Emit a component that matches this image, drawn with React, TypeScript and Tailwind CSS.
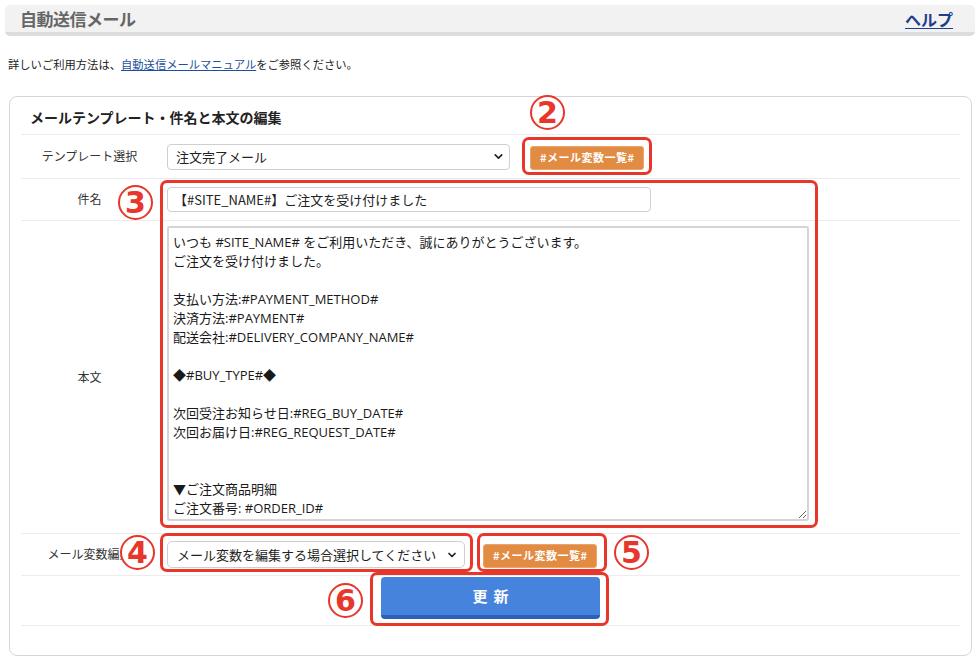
import { ChevronDown } from "lucide-react";

const FONT = { fontFamily: '"Noto Sans CJK JP", "Noto Sans", sans-serif' };
const BODY_FONT = { fontFamily: '"Open Sans", "Noto Sans CJK JP", sans-serif' };

const bodyText = `いつも #SITE_NAME# をご利用いただき、誠にありがとうございます。
ご注文を受け付けました。

支払い方法:#PAYMENT_METHOD#
決済方法:#PAYMENT#
配送会社:#DELIVERY_COMPANY_NAME#

◆#BUY_TYPE#◆

次回受注お知らせ日:#REG_BUY_DATE#
次回お届け日:#REG_REQUEST_DATE#


▼ご注文商品明細
ご注文番号: #ORDER_ID#
`;

function VarButton() {
  return (
    <button className="h-[24px] px-[9px] rounded-[3px] bg-[#e28b43] border border-[#eda46a] text-white text-[11px] font-bold tracking-[0.5px]">
      #メール変数一覧#
    </button>
  );
}

function Row({
  label,
  children,
  className = "",
}: {
  label?: string;
  children: React.ReactNode;
  className?: string;
}) {
  return (
    <div className={`flex border-t border-[#ececec] ${className}`}>
      <div className="w-[137px] shrink-0 self-center text-center text-[12px] text-[#333] whitespace-nowrap overflow-hidden">
        {label}
      </div>
      <div className="flex-1 flex items-center pl-[9px]">{children}</div>
    </div>
  );
}

// red annotation frame laid over the form
function Frame({ className }: { className: string }) {
  return (
    <div
      className={`absolute border-[3px] border-[#e8362a] rounded-[7px] pointer-events-none ${className}`}
    />
  );
}

function Num({ n, className }: { n: string; className: string }) {
  return (
    <div
      className={`absolute w-[35px] h-[35px] rounded-full border-2 border-[#e8362a] bg-white flex items-center justify-center text-[#e8362a] text-[30px] font-bold leading-none ${className}`}
      style={{ fontFamily: '"DejaVu Sans", sans-serif' }}
    >
      {n}
    </div>
  );
}

export default function App() {
  return (
    <div className="relative w-[980px] h-[660px] bg-white text-[#222]" style={FONT}>
      {/* Page header */}
      <div className="mx-[5px] pt-[5px]">
        <div className="h-[31px] rounded-[5px] bg-[#f2f2f2] border-b-[4px] border-[#dcdcdc] flex items-center justify-between pl-[15px] pr-[22px]">
          <h1 className="text-[17px] font-bold text-[#666] tracking-[-0.5px]">自動送信メール</h1>
          <a href="#" className="text-[16px] font-bold text-[#1d3f8e] underline underline-offset-2">
            ヘルプ
          </a>
        </div>
      </div>

      <p className="mt-[20px] ml-[8px] text-[11.3px] text-[#222]">
        詳しいご利用方法は、
        <a href="#" className="text-[#1d4f9c] underline">
          自動送信メールマニュアル
        </a>
        をご参照ください。
      </p>

      {/* Edit panel */}
      <div className="mt-[23px] ml-[9px] mr-[8px] h-[560px] border border-[#d6d6d6] rounded-[8px] px-[11px]">
        <h2 className="h-[37px] pt-[10px] pl-[9px] text-[14px] font-bold text-[#222]">
          メールテンプレート・件名と本文の編集
        </h2>

        <Row label="テンプレート選択" className="h-[44px]">
          <div className="relative w-[343px]">
            <select className="appearance-none w-full h-[26px] pl-[8px] rounded-[4px] border border-[#cfcfcf] bg-white text-[13px] text-[#222] outline-none">
              <option>注文完了メール</option>
            </select>
            <ChevronDown className="absolute right-[5px] top-[7px] w-[13px] h-[13px] text-[#222]" strokeWidth={3} />
          </div>
          <div className="ml-[20px]">
            <VarButton />
          </div>
        </Row>

        <Row label="件名" className="h-[42px]">
          <input
            defaultValue="【#SITE_NAME#】ご注文を受け付けました"
            className="w-[484px] h-[25px] px-[6px] rounded-[4px] border border-[#cfcfcf] text-[13px] text-[#222] outline-none"
          />
        </Row>

        <Row label="本文" className="h-[313px]">
          <div className="self-start pt-[5px]">
            <textarea
              defaultValue={bodyText}
              className="block w-[642px] h-[295px] pl-[4px] pt-[5px] rounded-[3px] border-2 border-[#d4d4d4] text-[13px] leading-[19px] text-[#1a1a1a] outline-none"
              style={{ ...BODY_FONT, resize: "both" }}
            />
          </div>
        </Row>

        <Row label="メール変数編集" className="h-[42px]">
          <div className="relative w-[298px]">
            <select className="appearance-none w-full h-[27px] pl-[9px] rounded-[5px] border border-[#cfcfcf] bg-white text-[13px] text-[#222] outline-none">
              <option>メール変数を編集する場合選択してください</option>
            </select>
            <ChevronDown className="absolute right-[7px] top-[8px] w-[12px] h-[12px] text-[#222]" strokeWidth={3.5} />
          </div>
          <div className="ml-[18px]">
            <VarButton />
          </div>
        </Row>

        <div className="h-[51px] border-t border-b border-[#ececec] flex justify-center pt-[1px]">
          <button className="w-[219px] h-[42px] rounded-[4px] bg-[#4683dc] border-b-[4px] border-[#2c61b8] text-white text-[15px] font-bold tracking-[6px] pl-[6px]">
            更新
          </button>
        </div>
      </div>

      {/* Annotations */}
      <Frame className="left-[522px] top-[137px] w-[130px] h-[38px]" />
      <Frame className="left-[160px] top-[180px] w-[658px] h-[348px]" />
      <Frame className="left-[160px] top-[533px] w-[313px] h-[39px]" />
      <Frame className="left-[477px] top-[533px] w-[130px] h-[39px]" />
      <Frame className="left-[370px] top-[572px] w-[239px] h-[54px]" />

      <Num n="2" className="left-[530px] top-[95px]" />
      <Num n="3" className="left-[118px] top-[185px]" />
      <Num n="4" className="left-[120px] top-[535px]" />
      <Num n="5" className="left-[614px] top-[535px]" />
      <Num n="6" className="left-[328px] top-[583px]" />
    </div>
  );
}
